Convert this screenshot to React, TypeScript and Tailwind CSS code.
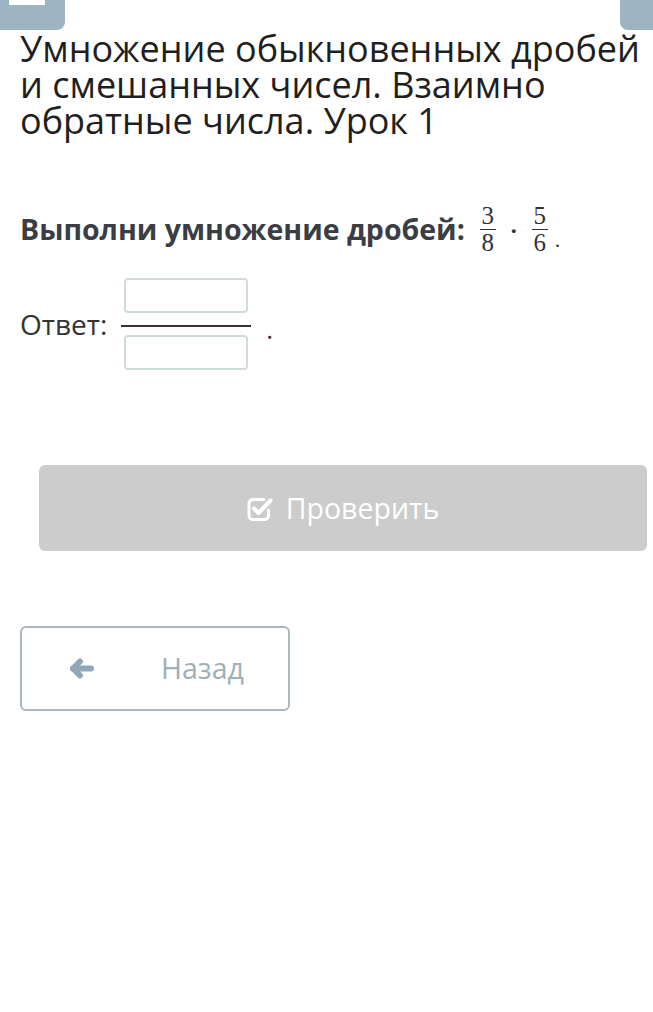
function Frac({ num, den }: { num: string; den: string }) {
  return (
    <span className="inline-flex flex-col items-center w-[18px] font-['Liberation_Serif',serif] text-[25px] leading-[22px] text-[#333]">
      <span>{num}</span>
      <span className="w-[16px] h-[1.5px] bg-[#333] my-[2px]" />
      <span>{den}</span>
    </span>
  );
}

function AnswerBox() {
  return (
    <div className="w-[124px] h-[35px] border-2 border-[#cfdcdb] rounded-[4px] bg-white" />
  );
}

function CheckSquareIcon() {
  return (
    <svg width="27" height="27" viewBox="0 0 27 27" fill="none" stroke="currentColor" strokeLinecap="round" strokeLinejoin="round">
      <path d="M17 4.5 H6 a4 4 0 0 0 -4 4 V20.5 a4 4 0 0 0 4 4 H17.5 a4 4 0 0 0 4 -4 V15" strokeWidth="3" />
      <path d="M7 13.5 L11.5 18 L23.5 5.5" strokeWidth="4.2" />
    </svg>
  );
}

function ArrowLeftIcon() {
  return (
    <svg width="27" height="21" viewBox="0 0 27 21" fill="none" stroke="currentColor" strokeLinecap="round" strokeLinejoin="round" strokeWidth="6">
      <path d="M23 10.5 H5" />
      <path d="M12 3.5 L5 10.5 L12 17.5" />
    </svg>
  );
}

export default function App() {
  return (
    <div className="min-h-[1012px] w-[653px] bg-white font-['Open_Sans',sans-serif] text-[#222]">
      <div className="flex justify-between h-[30px]">
        <div className="w-[65px] h-[30px] bg-[#9db4c2] rounded-br-[8px] pl-[9px]">
          <div className="w-[36px] h-[5px] bg-white" />
        </div>
        <div className="w-[33px] h-[30px] bg-[#9db4c2] rounded-bl-[8px]" />
      </div>

      <h1 className="pl-[20px] pr-[8px] mt-[1px] text-[36px] leading-[36px] font-normal text-[#1f1f1f]">
        Умножение обыкновенных дробей и смешанных чисел. Взаимно обратные числа. Урок 1
      </h1>

      <div className="px-[20px] mt-[64px] flex items-center">
        <span className="text-[28.5px] font-bold text-[#3a3e44] mr-[14px]">Выполни умножение дробей:</span>
        <Frac num="3" den="8" />
        <span className="mx-[13px] mt-[2px] text-[#333] text-[24px] font-bold font-['Liberation_Serif',serif]">·</span>
        <Frac num="5" den="6" />
        <span className="ml-[6px] mt-[20px] text-[#333] text-[22px] font-['Liberation_Serif',serif]">.</span>
      </div>

      <div className="px-[20px] mt-[22px] flex items-center">
        <span className="text-[28px] text-[#333] mr-[14px]">Ответ:</span>
        <div className="flex flex-col items-center w-[130px]">
          <AnswerBox />
          <div className="w-[130px] h-[2px] bg-[#333] mt-[12px] mb-[8px]" />
          <AnswerBox />
        </div>
        <span className="ml-[15px] mt-[10px] text-[26px] text-[#333]">.</span>
      </div>

      <div className="pl-[39px] pr-[6px] mt-[95px]">
        <button className="w-full h-[86px] rounded-[6px] bg-[#cccccc] flex items-center justify-center gap-[12px] text-white text-[28.5px]">
          <CheckSquareIcon />
          <span>Проверить</span>
        </button>
      </div>

      <div className="px-[20px] mt-[75px]">
        <button className="w-[270px] h-[85px] border-2 border-[#aab8be] rounded-[6px] bg-white flex items-center pl-[46px] text-[28.5px] text-[#9eb0b8]">
          <span className="text-[#8fa8b8]">
            <ArrowLeftIcon />
          </span>
          <span className="ml-[66px]">Назад</span>
        </button>
      </div>
    </div>
  );
}
